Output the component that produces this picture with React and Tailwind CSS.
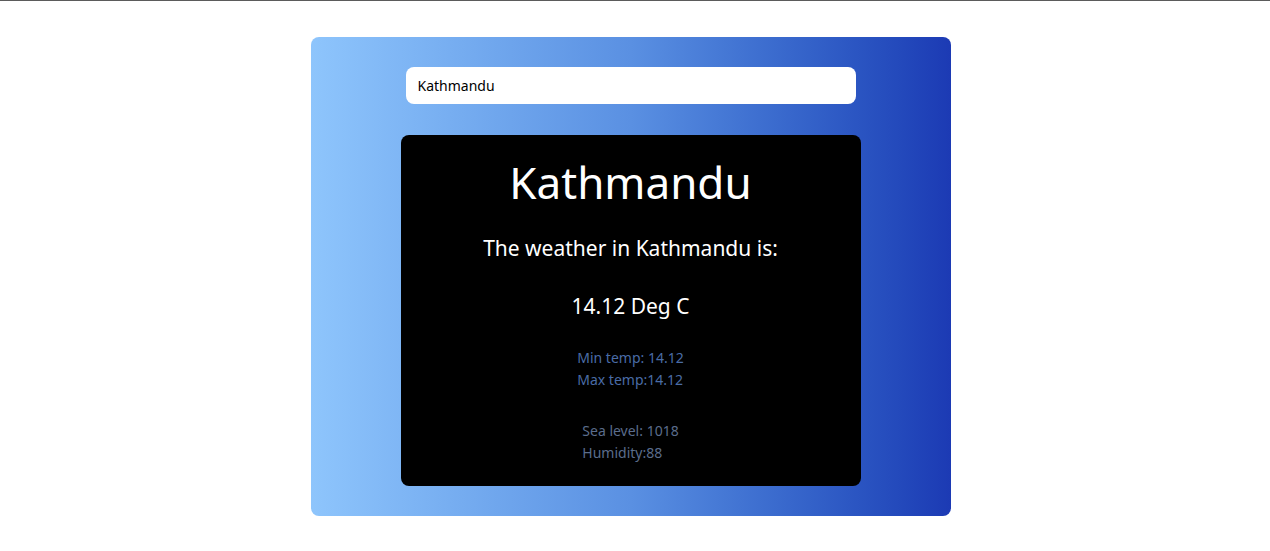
import React, { useState } from 'react';

const weather = {
  name: 'Kathmandu',
  temp: 14.12,
  temp_min: 14.12,
  temp_max: 14.12,
  sea_level: 1018,
  humidity: 88,
};

const App = () => {
  const [city, setCity] = useState('Kathmandu');

  return (
    <div className="min-h-[551px] bg-white border-t border-[#5b5b5b] pr-[9px] font-['Noto_Sans',sans-serif]">
      <div className="mx-auto mt-9 w-[640px] h-[479px] rounded-lg bg-gradient-to-r from-[#8ec5fc] via-[#5a90e2] to-[#1c3ab4] pt-[30px] flex flex-col items-center">
        <input
          type="text"
          value={city}
          onChange={(e) => setCity(e.target.value)}
          className="w-[450px] h-[37px] rounded-lg bg-white px-3 text-[14px] text-black outline-none"
        />

        <div className="mt-[31px] w-[460px] h-[351px] rounded-lg bg-black text-center pt-[17px]">
          <h1 className="text-[44px] leading-[60px] text-white font-normal">{weather.name}</h1>
          <h2 className="mt-[21px] text-[21px] leading-[30px] text-white">
            The weather in {weather.name} is:
          </h2>
          <h3 className="mt-[28px] text-[21px] leading-[30px] text-white">{weather.temp} Deg C</h3>

          <div className="mt-[26px] flex justify-center">
            <div className="text-left text-[14px] leading-[22px] text-[#4a6ca6]">
              <p>Min temp: {weather.temp_min}</p>
              <p>Max temp:{weather.temp_max}</p>
            </div>
          </div>

          <div className="mt-[29px] flex justify-center">
            <div className="text-left text-[14px] leading-[22px] text-[#5b6d8c]">
              <p>Sea level: {weather.sea_level}</p>
              <p>Humidity:{weather.humidity}</p>
            </div>
          </div>
        </div>
      </div>
    </div>
  );
};

export default App;
